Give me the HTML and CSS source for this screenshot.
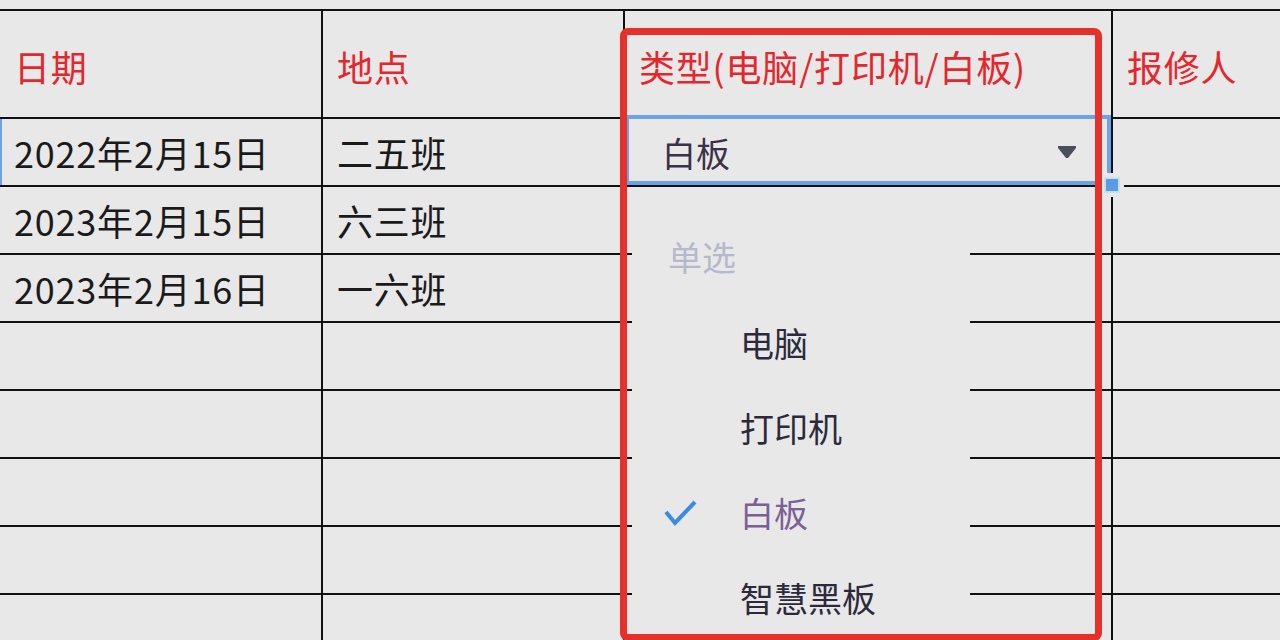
FILE: index.html
```html
<!DOCTYPE html>
<html lang="zh-CN">
<head>
<meta charset="utf-8">
<title>报修表</title>
<link rel="stylesheet" href="styles.css">
</head>
<body>
<div class="page">
  <div class="sheet">
    <div class="cell head">日期</div>
    <div class="cell head">地点</div>
    <div class="cell head">类型(电脑/打印机/白板)</div>
    <div class="cell head last">报修人</div>

    <div class="cell row-mark">2022年2月15日</div>
    <div class="cell">二五班</div>
    <div class="cell selected">
      <span class="sel-value">白板</span>
      <svg class="caret" width="18" height="12" viewBox="0 0 18 12"><polygon points="0,0 18,0 18,2 10,12 8,12 0,2" fill="#4b4f5c"/></svg>
      <span class="handle"></span>
    </div>
    <div class="cell last"></div>

    <div class="cell">2023年2月15日</div>
    <div class="cell">六三班</div>
    <div class="cell"></div>
    <div class="cell last"></div>

    <div class="cell">2023年2月16日</div>
    <div class="cell">一六班</div>
    <div class="cell"></div>
    <div class="cell last"></div>

    <div class="cell"></div><div class="cell"></div><div class="cell"></div><div class="cell last"></div>
    <div class="cell"></div><div class="cell"></div><div class="cell"></div><div class="cell last"></div>
    <div class="cell"></div><div class="cell"></div><div class="cell"></div><div class="cell last"></div>
    <div class="cell"></div><div class="cell"></div><div class="cell"></div><div class="cell last"></div>
    <div class="cell"></div><div class="cell"></div><div class="cell"></div><div class="cell last"></div>
  </div>

  <div class="dropdown">
    <div class="placeholder">单选</div>
    <div class="option"><span class="check-slot"></span><span>电脑</span></div>
    <div class="option"><span class="check-slot"></span><span>打印机</span></div>
    <div class="option active"><span class="check-slot"><svg width="34" height="28" viewBox="0 0 34 28"><polyline points="2,13 11,24 31,3" fill="none" stroke="#3a8ae6" stroke-width="4" stroke-linejoin="miter"/></svg></span><span>白板</span></div>
    <div class="option"><span class="check-slot"></span><span>智慧黑板</span></div>
  </div>

  <div class="highlight"></div>
</div>
</body>
</html>
```

FILE: styles.css
```css
* { box-sizing: border-box; }

html, body {
  margin: 0;
  padding: 0;
  width: 1280px;
  height: 640px;
  overflow: hidden;
  background: #e8e8e8;
}

.page {
  position: relative;
  width: 1280px;
  height: 640px;
  padding-top: 9px;
  font-family: "Noto Sans CJK SC", "Noto Sans", sans-serif;
}

.sheet {
  display: grid;
  grid-template-columns: 323px 302px 488px 1fr;
  grid-template-rows: 108px;
  grid-auto-rows: 68px;
  border-top: 2px solid #111;
}

.cell {
  display: flex;
  align-items: center;
  padding-left: 14px;
  border-right: 2px solid #111;
  border-bottom: 2px solid #111;
  font-size: 36px;
  letter-spacing: 0.8px;
  color: #1a1a1a;
  white-space: nowrap;
}

.cell.last { border-right: none; }

.cell.head {
  color: #e5262d;
  padding-top: 4px;
}

.row-mark { box-shadow: inset 2px 0 0 #6ca3e8; }

.selected {
  position: relative;
  padding-left: 37px;
  padding-right: 35px;
  justify-content: space-between;
}

.selected::after {
  content: "";
  position: absolute;
  top: -4px;
  left: 0;
  right: 0;
  bottom: 0;
  border: 4px solid #6ca3e8;
  pointer-events: none;
}

.sel-value {
  font-size: 34px;
  letter-spacing: 0;
  color: #3b3048;
}

.caret { display: block; }

.handle {
  position: absolute;
  right: -9px;
  bottom: -8px;
  width: 16px;
  height: 16px;
  background: #5b9be6;
  border: 2px solid #c6e2ec;
  box-shadow: 0 0 0 4px #e8e8e8;
  z-index: 2;
}

.dropdown {
  position: absolute;
  left: 632px;
  top: 188px;
  width: 338px;
  bottom: 0;
  background: #e8e8e8;
  padding-top: 26px;
  z-index: 3;
}

.placeholder {
  height: 86px;
  padding-left: 36px;
  font-size: 34px;
  line-height: 1;
  display: flex;
  align-items: center;
  color: #b6b9cb;
}

.option {
  height: 85px;
  display: flex;
  align-items: center;
  padding-left: 32px;
  font-size: 34px;
  color: #2c2a3a;
}

.check-slot {
  width: 76px;
  height: 28px;
  display: flex;
  align-items: center;
}

.option.active { color: #7b5f96; }

.highlight {
  position: absolute;
  left: 620px;
  top: 28px;
  width: 482px;
  height: 613px;
  border: 7px solid #e8302a;
  border-radius: 8px;
  z-index: 4;
  pointer-events: none;
}
```
